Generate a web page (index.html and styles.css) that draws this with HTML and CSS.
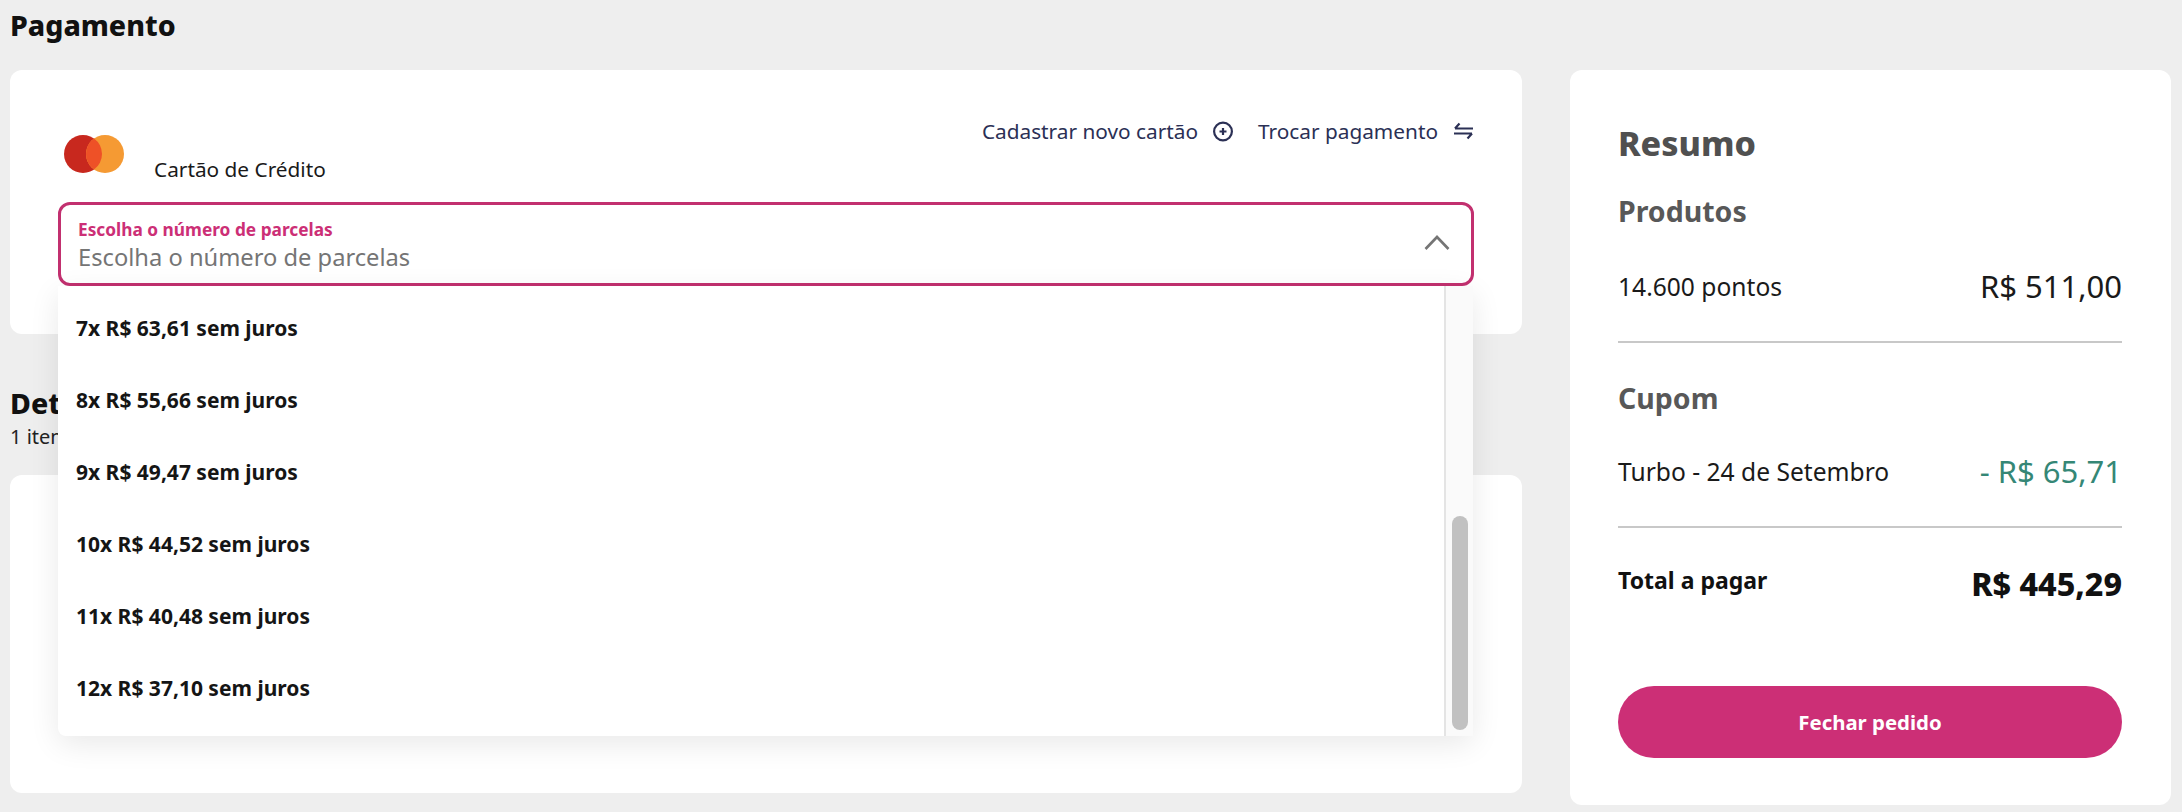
FILE: index.html
```html
<!DOCTYPE html>
<html lang="pt-BR">
<head>
<meta charset="utf-8">
<title>Pagamento</title>
<link rel="stylesheet" href="styles.css">
</head>
<body>
<div class="page">
  <main class="main">
    <h1 class="page-title">Pagamento</h1>
    <section class="card pay-card">
      <div class="pay-head">
        <div class="method">
          <svg class="mc" width="60" height="38" viewBox="0 0 60 38" aria-hidden="true">
            <circle cx="19" cy="19" r="19" fill="#c8281e"/>
            <circle cx="41" cy="19" r="19" fill="#f59a33"/>
            <path d="M30 3.5a19 19 0 0 1 0 31a19 19 0 0 1 0-31z" fill="#ee5127"/>
          </svg>
          <span class="method-name">Cartão de Crédito</span>
        </div>
        <div class="links">
          <a class="link">Cadastrar novo cartão
            <svg width="21" height="21" viewBox="0 0 21 21" fill="none" stroke="#2b3055" stroke-width="2.200" aria-hidden="true"><circle cx="10" cy="10.5" r="8.9"/><path d="M10 7v7M6.500 10.500h7"/></svg>
          </a>
          <a class="link">Trocar pagamento
            <svg width="21" height="20" viewBox="0 0 21 20" fill="none" stroke="#2b3055" stroke-width="2.200" aria-hidden="true"><path d="M20 7.500H2M6.500 2.500 2 7.500M1 12.500h18M14.500 17.500 19 12.500"/></svg>
          </a>
        </div>
      </div>
      <div class="select-wrap">
        <div class="select">
          <div class="select-text">
            <span class="select-label">Escolha o número de parcelas</span>
            <span class="select-value">Escolha o número de parcelas</span>
          </div>
          <svg class="chevron" width="26" height="15" viewBox="0 0 26 15" fill="none" stroke="#757575" stroke-width="2.600" aria-hidden="true"><path d="M1.500 14 13 2l11.500 12"/></svg>
        </div>
        <div class="dropdown">
          <ul class="options">
            <li>7x R$ 63,61 sem juros</li>
            <li>8x R$ 55,66 sem juros</li>
            <li>9x R$ 49,47 sem juros</li>
            <li>10x R$ 44,52 sem juros</li>
            <li>11x R$ 40,48 sem juros</li>
            <li>12x R$ 37,10 sem juros</li>
          </ul>
          <div class="scrolltrack"><div class="scrollthumb"></div></div>
        </div>
      </div>
    </section>
    <h2 class="details-title">Detalhes do pedido</h2>
    <p class="details-sub">1 item</p>
    <section class="card items-card"></section>
  </main>
  <aside class="card summary">
    <h2 class="sum-title">Resumo</h2>
    <h3 class="sum-head">Produtos</h3>
    <div class="sum-row"><span>14.600 pontos</span><span class="amount">R$ 511,00</span></div>
    <hr class="rule">
    <h3 class="sum-head coupon-head">Cupom</h3>
    <div class="sum-row coupon-row"><span>Turbo - 24 de Setembro</span><span class="amount discount">- R$ 65,71</span></div>
    <hr class="rule">
    <div class="total-row"><span class="total-label">Total a pagar</span><span class="total-value">R$ 445,29</span></div>
    <button class="cta">Fechar pedido</button>
  </aside>
</div>
</body>
</html>
```
FILE: styles.css
```css
* { box-sizing: border-box; }
html, body { margin: 0; padding: 0; }
body {
  background: #eeeeee;
  font-family: "Noto Sans", "Lato", sans-serif;
  color: #111;
  height: 812px;
  overflow: hidden;
}
.page {
  display: grid;
  grid-template-columns: 1512px 601px;
  column-gap: 48px;
  padding: 0 11px 0 10px;
}
.card { background: #fff; border-radius: 12px; }
.page-title {
  margin: 0;
  height: 70px;
  padding-top: 7px;
  font-size: 28.5px;
  line-height: 36px;
  font-weight: 800;
}
.pay-card { height: 264px; padding: 64px 48px 0; }
.pay-head { display: flex; justify-content: space-between; height: 68px; }
.method { display: flex; margin-left: 6px; }
.mc { margin-top: 1px; }
.method-name { margin: 23px 0 0 30px; font-size: 20.8px; line-height: 24px; color: #1a1a1a; }
.links { display: flex; gap: 24px; margin-top: -18px; height: 30px; align-items: center; }
.link { display: flex; align-items: center; gap: 15px; font-size: 20.8px; color: #2b3055; }
.select-wrap { position: relative; }
.select {
  height: 84px;
  border: 3px solid #c2306f;
  border-radius: 12px;
  display: flex;
  align-items: center;
  justify-content: space-between;
  padding: 0 21px 0 17px;
  background: #fff;
}
.select-text { display: flex; flex-direction: column; padding-top: 4px; }
.select-label { font-size: 17.3px; line-height: 22px; font-weight: 700; color: #cc2f76; }
.select-value { font-size: 23.7px; line-height: 32px; color: #757575; }
.chevron { margin-top: -4px; }
.dropdown {
  position: absolute;
  z-index: 2;
  left: 0;
  top: 84px;
  width: 1415px;
  height: 450px;
  display: flex;
  background: #fff;
  box-shadow: 0 8px 30px rgba(0,0,0,.09);
  border-radius: 0 0 8px 8px;
}
.options { flex: 1; margin: 0; padding: 6px 0 0; list-style: none; }
.options li {
  height: 72px;
  display: flex;
  align-items: center;
  padding-left: 18px;
  font-size: 21px;
  font-weight: 700;
  color: #151515;
}
.scrolltrack {
  width: 29px;
  background: #fafafa;
  border-left: 2px solid #e4e4e4;
  padding: 230px 5px 6px 6px;
}
.scrollthumb { height: 214px; width: 16px; background: #c1c1c1; border-radius: 8px; }
.details-title {
  margin: 51px 0 0;
  font-size: 28.5px;
  line-height: 36px;
  font-weight: 800;
}
.details-sub { margin: 3px 0 0; font-size: 20px; line-height: 26px; color: #222; }
.items-card { height: 318px; margin-top: 25px; }
.summary { margin-top: 70px; height: 735px; padding: 0 49px 0 48px; }
.sum-title { margin: 53px 0 0; font-size: 34px; line-height: 40px; font-weight: 800; color: #505050; }
.sum-head { margin: 30px 0 0; font-size: 28.5px; line-height: 36px; font-weight: 700; color: #585858; }
.sum-row {
  display: flex;
  justify-content: space-between;
  align-items: center;
  margin-top: 39px;
  height: 36px;
  font-size: 24.6px;
  color: #1a1a1a;
}
.amount { font-size: 31px; }
.discount { color: #358776; }
.rule { margin: 37px 0 0; border: 0; border-top: 2px solid #c8c8c8; }
.coupon-head { margin-top: 37px; }
.coupon-row { margin-top: 37px; }
.total-row { display: flex; justify-content: space-between; align-items: center; margin-top: 35px; height: 40px; }
.total-label { font-size: 23px; font-weight: 700; margin-top: -7px; }
.total-value { font-size: 32.2px; font-weight: 800; }
.cta {
  display: block;
  width: 100%;
  height: 72px;
  margin-top: 83px;
  border: 0;
  border-radius: 36px;
  background: #cc2f76;
  color: #fff;
  font: 700 20.4px "Noto Sans", "Lato", sans-serif;
}
```
